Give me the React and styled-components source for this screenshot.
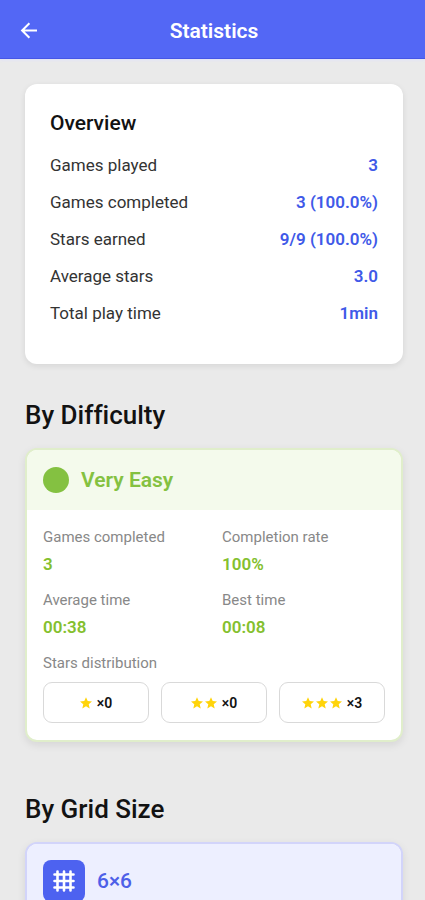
import React from "react";
import styled, { createGlobalStyle } from "styled-components";

const GlobalStyle = createGlobalStyle`
  *, *::before, *::after { box-sizing: border-box; }
  body {
    margin: 0;
    background: #eaeaea;
    font-family: Roboto, "Liberation Sans", sans-serif;
    font-variant-ligatures: none;
    color: #121212;
  }
  h1, h2, h3, dl, dt, dd, p, ul { margin: 0; padding: 0; }
`;

const Screen = styled.div`
  display: flex;
  flex-direction: column;
  height: 100vh;
`;

const TopBar = styled.header`
  display: grid;
  grid-template-columns: 56px 1fr 56px;
  align-items: center;
  flex: none;
  height: 59px;
  padding: 3px 0 0 3px;
  background: #5367f5;
  border-bottom: 1px solid #4656e6;
  box-shadow: 0 1px 3px #dfe1fb;
`;

const BackButton = styled.button`
  display: flex;
  align-items: center;
  justify-content: center;
  width: 52px;
  height: 48px;
  padding: 0;
  border: 0;
  background: none;
  color: #fff;
  cursor: pointer;
`;

const BarTitle = styled.h1`
  font-size: 21px;
  line-height: 28px;
  font-weight: 600;
  text-align: center;
  color: #fff;
`;

const Content = styled.main`
  flex: 1;
  min-height: 0;
  overflow-y: auto;
  scrollbar-width: none;
  padding: 25px 22px 25px 25px;
`;

const OverviewCard = styled.section`
  padding: 25px 25px 40px;
  border-radius: 12px;
  background: #fff;
  box-shadow: 0 2px 6px rgba(0, 0, 0, 0.09);
`;

const CardTitle = styled.h2`
  margin-bottom: 17px;
  font-size: 21px;
  line-height: 28px;
  font-weight: 500;
`;

const Rows = styled.dl`
  display: grid;
  gap: 15px;
`;

const Row = styled.div`
  display: flex;
  justify-content: space-between;
  font-size: 17px;
  line-height: 22px;
`;

const RowLabel = styled.dt`
  color: #333;
`;

const RowValue = styled.dd`
  font-weight: 600;
  color: #4059e8;
`;

const SectionTitle = styled.h2`
  margin: ${(p) => p.$gap}px 0 16px;
  font-size: 26px;
  line-height: 34px;
  font-weight: 500;
`;

const GroupCard = styled.section`
  overflow: hidden;
  border: 2px solid ${(p) => p.$border};
  border-radius: 12px;
  background: #fff;
  box-shadow: 0 3px 9px rgba(0, 0, 0, 0.09);
`;

const GroupHeader = styled.header`
  display: flex;
  align-items: center;
  gap: 12px;
  padding: 16px;
  background: ${(p) => p.$tint};
  color: ${(p) => p.$color};
`;

const GroupTitle = styled.h3`
  font-size: 21px;
  line-height: 28px;
  font-weight: ${(p) => p.$weight};
`;

const Dot = styled.span`
  width: 26px;
  height: 26px;
  border-radius: 50%;
  background: #84c141;
`;

const GridBadge = styled.span`
  display: flex;
  align-items: center;
  justify-content: center;
  width: 42px;
  height: 42px;
  border-radius: 8px;
  background: #4d62f0;
`;

const GroupBody = styled.div`
  padding: 16px 16px 17px;
`;

const StatGrid = styled.dl`
  display: grid;
  grid-template-columns: 1fr 1fr;
  column-gap: 16px;
  row-gap: 12px;
`;

const StatLabel = styled.dt`
  font-size: 15px;
  line-height: 22px;
  color: #888;
`;

const StatValue = styled.dd`
  margin-top: 3px;
  font-size: 17px;
  line-height: 26px;
  font-weight: 600;
  color: #84c02e;
`;

const StarsLabel = styled.p`
  margin: 12px 0 8px;
  font-size: 15px;
  line-height: 22px;
  color: #888;
`;

const StarBoxes = styled.ul`
  display: grid;
  grid-template-columns: repeat(3, 1fr);
  gap: 12px;
  list-style: none;
`;

const StarBox = styled.li`
  display: flex;
  align-items: center;
  justify-content: center;
  gap: 5px;
  height: 41px;
  border: 1px solid #d9d9d9;
  border-radius: 9px;
  font-size: 14px;
  font-weight: 600;
`;

const StarGroup = styled.span`
  display: flex;
  gap: 2px;
`;

const BackIcon = () => (
  <svg width="18" height="18" viewBox="0 0 18 18" fill="none" stroke="currentColor" strokeWidth="2" aria-hidden="true">
    <path d="M17 8.500H2M9.400 1.200 2.100 8.500l7.300 7.300" />
  </svg>
);

const StarIcon = () => (
  <svg width="12" height="12" viewBox="0 0 24 24" fill="#ffd40a" aria-hidden="true">
    <path d="M12 18.5 19.4 23l-2-8.4L24 8.9l-8.600-.7L12 .3 8.600 8.200 0 8.900l6.600 5.700-2 8.400z" />
  </svg>
);

const GridIcon = () => (
  <svg width="22" height="22" viewBox="0 0 22 22" fill="none" stroke="#fff" strokeWidth="2.600" strokeLinecap="round" aria-hidden="true">
    <path d="M4.500 1.500v19M11 1.500v19M17.500 1.500v19M1.500 4.500h19M1.500 11h19M1.500 17.500h19" />
  </svg>
);

const overview = [
  ["Games played", "3"],
  ["Games completed", "3 (100.0%)"],
  ["Stars earned", "9/9 (100.0%)"],
  ["Average stars", "3.0"],
  ["Total play time", "1min"],
];

const difficulty = [
  ["Games completed", "3"],
  ["Completion rate", "100%"],
  ["Average time", "00:38"],
  ["Best time", "00:08"],
];

const distribution = [
  { stars: 1, count: 0 },
  { stars: 2, count: 0 },
  { stars: 3, count: 3 },
];

export default function App() {
  return (
    <Screen>
      <GlobalStyle />
      <TopBar>
        <BackButton type="button" aria-label="Back">
          <BackIcon />
        </BackButton>
        <BarTitle>Statistics</BarTitle>
      </TopBar>
      <Content>
        <OverviewCard>
          <CardTitle>Overview</CardTitle>
          <Rows>
            {overview.map(([label, value]) => (
              <Row key={label}>
                <RowLabel>{label}</RowLabel>
                <RowValue>{value}</RowValue>
              </Row>
            ))}
          </Rows>
        </OverviewCard>

        <SectionTitle $gap={34}>By Difficulty</SectionTitle>
        <GroupCard $border="#e0eecb">
          <GroupHeader $tint="#f4faec" $color="#84c141">
            <Dot />
            <GroupTitle $weight={600}>Very Easy</GroupTitle>
          </GroupHeader>
          <GroupBody>
            <StatGrid>
              {difficulty.map(([label, value]) => (
                <div key={label}>
                  <StatLabel>{label}</StatLabel>
                  <StatValue>{value}</StatValue>
                </div>
              ))}
            </StatGrid>
            <StarsLabel>Stars distribution</StarsLabel>
            <StarBoxes>
              {distribution.map(({ stars, count }) => (
                <StarBox key={stars}>
                  <StarGroup>
                    {Array.from({ length: stars }, (_, i) => (
                      <StarIcon key={i} />
                    ))}
                  </StarGroup>
                  ×{count}
                </StarBox>
              ))}
            </StarBoxes>
          </GroupBody>
        </GroupCard>

        <SectionTitle $gap={50}>By Grid Size</SectionTitle>
        <GroupCard $border="#d2d4fa">
          <GroupHeader $tint="#edefff" $color="#4d60e8">
            <GridBadge>
              <GridIcon />
            </GridBadge>
            <GroupTitle $weight={500}>6×6</GroupTitle>
          </GroupHeader>
        </GroupCard>
      </Content>
    </Screen>
  );
}
